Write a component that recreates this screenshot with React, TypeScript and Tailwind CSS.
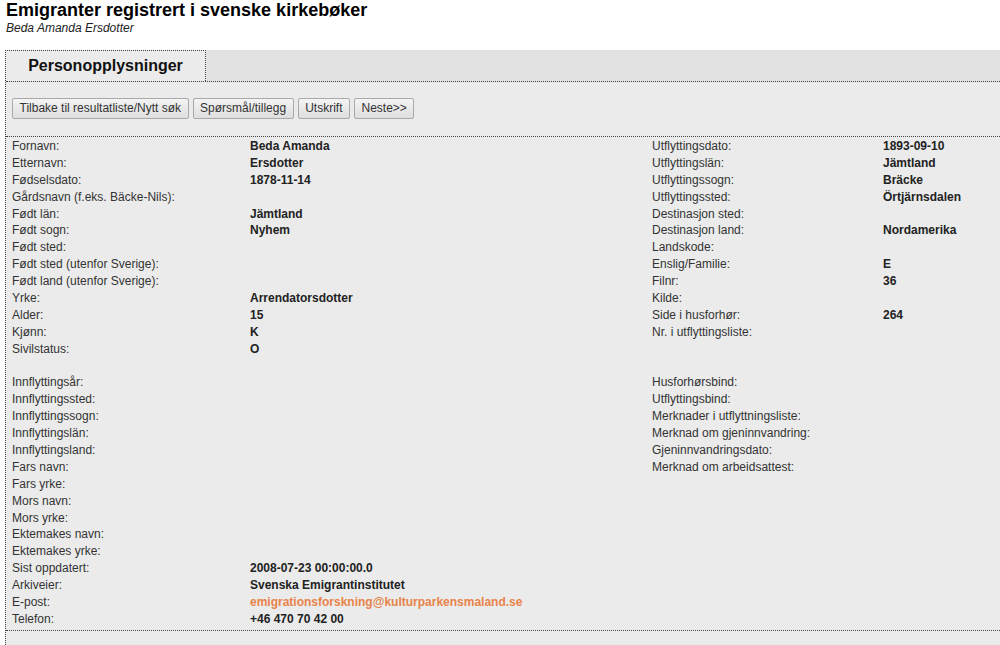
import React from "react";

type Cell = [string, string, boolean?];

const left: Cell[] = [
  ["Fornavn:", "Beda Amanda"],
  ["Etternavn:", "Ersdotter"],
  ["Fødselsdato:", "1878-11-14"],
  ["Gårdsnavn (f.eks. Bäcke-Nils):", ""],
  ["Født län:", "Jämtland"],
  ["Født sogn:", "Nyhem"],
  ["Født sted:", ""],
  ["Født sted (utenfor Sverige):", ""],
  ["Født land (utenfor Sverige):", ""],
  ["Yrke:", "Arrendatorsdotter"],
  ["Alder:", "15"],
  ["Kjønn:", "K"],
  ["Sivilstatus:", "O"],
  ["", ""],
  ["Innflyttingsår:", ""],
  ["Innflyttingssted:", ""],
  ["Innflyttingssogn:", ""],
  ["Innflyttingslän:", ""],
  ["Innflyttingsland:", ""],
  ["Fars navn:", ""],
  ["Fars yrke:", ""],
  ["Mors navn:", ""],
  ["Mors yrke:", ""],
  ["Ektemakes navn:", ""],
  ["Ektemakes yrke:", ""],
  ["Sist oppdatert:", "2008-07-23 00:00:00.0"],
  ["Arkiveier:", "Svenska Emigrantinstitutet"],
  ["E-post:", "emigrationsforskning@kulturparkensmaland.se", true],
  ["Telefon:", "+46 470 70 42 00"],
];

const right: Cell[] = [
  ["Utflyttingsdato:", "1893-09-10"],
  ["Utflyttingslän:", "Jämtland"],
  ["Utflyttingssogn:", "Bräcke"],
  ["Utflyttingssted:", "Örtjärnsdalen"],
  ["Destinasjon sted:", ""],
  ["Destinasjon land:", "Nordamerika"],
  ["Landskode:", ""],
  ["Enslig/Familie:", "E"],
  ["Filnr:", "36"],
  ["Kilde:", ""],
  ["Side i husforhør:", "264"],
  ["Nr. i utflyttingsliste:", ""],
  ["", ""],
  ["", ""],
  ["Husforhørsbind:", ""],
  ["Utflyttingsbind:", ""],
  ["Merknader i utflyttningsliste:", ""],
  ["Merknad om gjeninnvandring:", ""],
  ["Gjeninnvandringsdato:", ""],
  ["Merknad om arbeidsattest:", ""],
];

function Btn({ children }: { children: React.ReactNode }) {
  return (
    <button className="h-[21px] px-[6.5px] border border-[#a9a9a9] rounded-[2px] bg-gradient-to-b from-[#f4f4f4] to-[#dedede] text-[12px] leading-[19px] text-[#333]">
      {children}
    </button>
  );
}

export default function App() {
  const rows = left.map((l, i) => {
    const r = right[i] || ["", ""];
    return { l, r };
  });
  return (
    <div className="min-h-[645px] bg-white font-['Liberation_Sans',Arial,sans-serif] text-[#333] overflow-hidden">
      <div className="pl-[6px]">
        <h1 className="text-[18px] font-bold leading-[21px] text-black">
          Emigranter registrert i svenske kirkebøker
        </h1>
        <div className="text-[12px] italic leading-[14px] text-[#222]">
          Beda Amanda Ersdotter
        </div>
      </div>
      <div className="ml-[5px] mt-[15px] bg-[#ebebeb] border-l border-dotted border-[#444] min-h-[600px]">
        <div className="flex h-[32px] bg-[#e2e2e3] border-b border-dotted border-[#444]">
          <div className="w-[201px] -ml-px border-t border-x border-dotted border-[#444] bg-[#ebebeb] flex items-center justify-center text-[16px] font-bold text-[#111]">
            Personopplysninger
          </div>
        </div>
        <div className="flex gap-[4px] pl-[6px] pt-[16px] pb-[17px] border-b border-dotted border-[#444]">
          <Btn>Tilbake til resultatliste/Nytt søk</Btn>
          <Btn>Spørsmål/tillegg</Btn>
          <Btn>Utskrift</Btn>
          <Btn>Neste&gt;&gt;</Btn>
        </div>
        <div className="pl-[6px] pt-[1px] pb-[2px] border-b border-dotted border-[#444] text-[12px]">
          {rows.map(({ l, r }, i) => (
            <div
              key={i}
              className="grid grid-cols-[238px_402px_231px_1fr] h-[16.9px] leading-[16.9px] whitespace-nowrap"
            >
              <div className="text-[#333]">{l[0]}</div>
              <div className={l[2] ? "font-bold text-[#e8834a]" : "font-bold text-[#222]"}>{l[1]}</div>
              <div className="text-[#333]">{r[0]}</div>
              <div className="font-bold text-[#222]">{r[1]}</div>
            </div>
          ))}
        </div>
        <div className="h-[20px]" />
      </div>
    </div>
  );
}
